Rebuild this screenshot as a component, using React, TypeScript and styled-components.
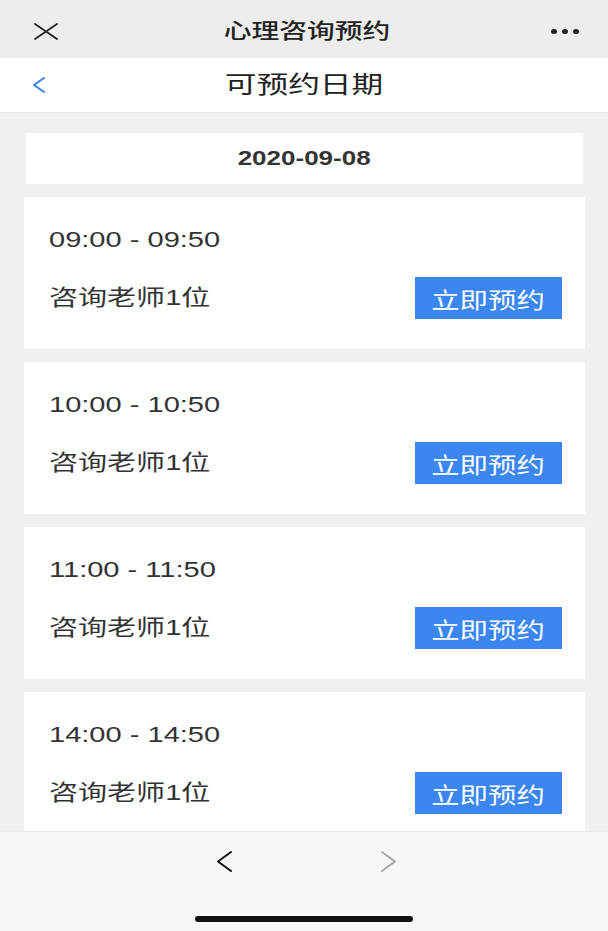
import React from "react";
import styled, { createGlobalStyle } from "styled-components";

// the screenshot is stretched sideways, so text is widened to match
const STRETCH = 1.32;

const GlobalStyle = createGlobalStyle`
  * {
    box-sizing: border-box;
  }
  body {
    margin: 0;
    background: #f0f0f0;
    font-family: "Liberation Sans", "Noto Sans CJK SC", sans-serif;
    color: #333;
  }
`;

const Page = styled.div`
  width: 608px;
  height: 931px;
  display: flex;
  flex-direction: column;
  overflow: hidden;
  background: #f0f0f0;
`;

const TopBar = styled.header`
  height: 58px;
  flex-shrink: 0;
  display: grid;
  grid-template-columns: 1fr auto 1fr;
  align-items: center;
  padding: 4px 29px 0 34px;
  background: #ededed;
`;

const NavBar = styled.nav`
  height: 55px;
  flex-shrink: 0;
  display: grid;
  grid-template-columns: 1fr auto 1fr;
  align-items: center;
  padding: 0 33px;
  background: #fff;
  border-bottom: 1px solid #e9e9e9;
`;

const Title = styled.h1<{ $size: number; $weight?: number }>`
  margin: 0;
  font-size: ${(p) => p.$size}px;
  font-weight: ${(p) => p.$weight ?? 400};
  line-height: 1.3;
  color: #222;
  transform: scaleX(${STRETCH});
  transform-origin: center;
  white-space: nowrap;
`;

const Side = styled.div<{ $end?: boolean }>`
  display: flex;
  justify-content: ${(p) => (p.$end ? "flex-end" : "flex-start")};
  align-items: center;
`;

const Dots = styled.div`
  display: flex;
  gap: 5px;
`;

const Dot = styled.span`
  width: 6px;
  height: 5px;
  border-radius: 50%;
  background: #222;
`;

const Content = styled.main`
  flex: 1;
  overflow: hidden;
  display: flex;
  flex-direction: column;
  gap: 13px;
  padding: 20px 23px 0 24px;
`;

const DateCard = styled.div`
  flex-shrink: 0;
  height: 51px;
  margin: 0 2px;
  display: flex;
  align-items: center;
  justify-content: center;
  background: #fff;
`;

const DateText = styled.span`
  display: inline-block;
  font-size: 20px;
  font-weight: 700;
  color: #333;
  transform: scaleX(1.3);
`;

const SlotCard = styled.div`
  flex-shrink: 0;
  padding: 28px 23px 30px 25px;
  background: #fff;
`;

const Text = styled.div<{ $size?: number }>`
  font-size: ${(p) => p.$size ?? 22}px;
  line-height: 30px;
  color: #333;
  white-space: nowrap;
  transform: scaleX(${STRETCH});
  transform-origin: left center;
`;

const SlotRow = styled.div`
  margin-top: 22px;
  display: flex;
  align-items: center;
  justify-content: space-between;
`;

const BookButton = styled.button`
  width: 147px;
  height: 42px;
  border: none;
  padding: 0;
  background: #3b86f0;
  color: #fff;
  font-family: inherit;
  cursor: pointer;
  display: flex;
  align-items: center;
  justify-content: center;
`;

const ButtonLabel = styled.span`
  display: inline-block;
  font-size: 21.5px;
  transform: scaleX(${STRETCH});
`;

const BottomBar = styled.footer`
  height: 100px;
  flex-shrink: 0;
  display: flex;
  flex-direction: column;
  align-items: center;
  background: #f7f7f7;
  border-top: 1px solid #ebebeb;
`;

const Arrows = styled.div`
  display: flex;
  gap: 149px;
  margin-top: 19px;
  margin-left: 4px;
`;

const HomeIndicator = styled.div`
  margin-top: 44px;
  width: 218px;
  height: 6px;
  border-radius: 3px;
  background: #111;
`;

const slots = ["09:00 - 09:50", "10:00 - 10:50", "11:00 - 11:50", "14:00 - 14:50"];

const CloseIcon = () => (
  <svg width="24" height="17" viewBox="0 0 24 17">
    <path d="M1 1 L23 16 M23 1 L1 16" stroke="#222" strokeWidth="1.8" strokeLinecap="round" />
  </svg>
);

const Chevron = ({ dir, color, w, h }: { dir: "left" | "right"; color: string; w: number; h: number }) => (
  <svg width={w} height={h} viewBox={`0 0 ${w} ${h}`}>
    <path
      d={dir === "left" ? `M${w - 1} 1 L1 ${h / 2} L${w - 1} ${h - 1}` : `M1 1 L${w - 1} ${h / 2} L1 ${h - 1}`}
      fill="none"
      stroke={color}
      strokeWidth="2"
      strokeLinecap="round"
      strokeLinejoin="round"
    />
  </svg>
);

export default function App() {
  return (
    <>
      <GlobalStyle />
      <Page>
        <TopBar>
          <Side>
            <CloseIcon />
          </Side>
          <Title $size={21} $weight={500}>心理咨询预约</Title>
          <Side $end>
            <Dots>
              <Dot />
              <Dot />
              <Dot />
            </Dots>
          </Side>
        </TopBar>

        <NavBar>
          <Side>
            <Chevron dir="left" color="#3f7fdf" w={12} h={16} />
          </Side>
          <Title $size={24}>可预约日期</Title>
          <Side />
        </NavBar>

        <Content>
          <DateCard>
            <DateText>2020-09-08</DateText>
          </DateCard>
          {slots.map((time) => (
            <SlotCard key={time}>
              <Text>{time}</Text>
              <SlotRow>
                <Text>咨询老师1位</Text>
                <BookButton>
                  <ButtonLabel>立即预约</ButtonLabel>
                </BookButton>
              </SlotRow>
            </SlotCard>
          ))}
        </Content>

        <BottomBar>
          <Arrows>
            <Chevron dir="left" color="#111" w={15} h={21} />
            <Chevron dir="right" color="#a8a8a8" w={15} h={21} />
          </Arrows>
          <HomeIndicator />
        </BottomBar>
      </Page>
    </>
  );
}
